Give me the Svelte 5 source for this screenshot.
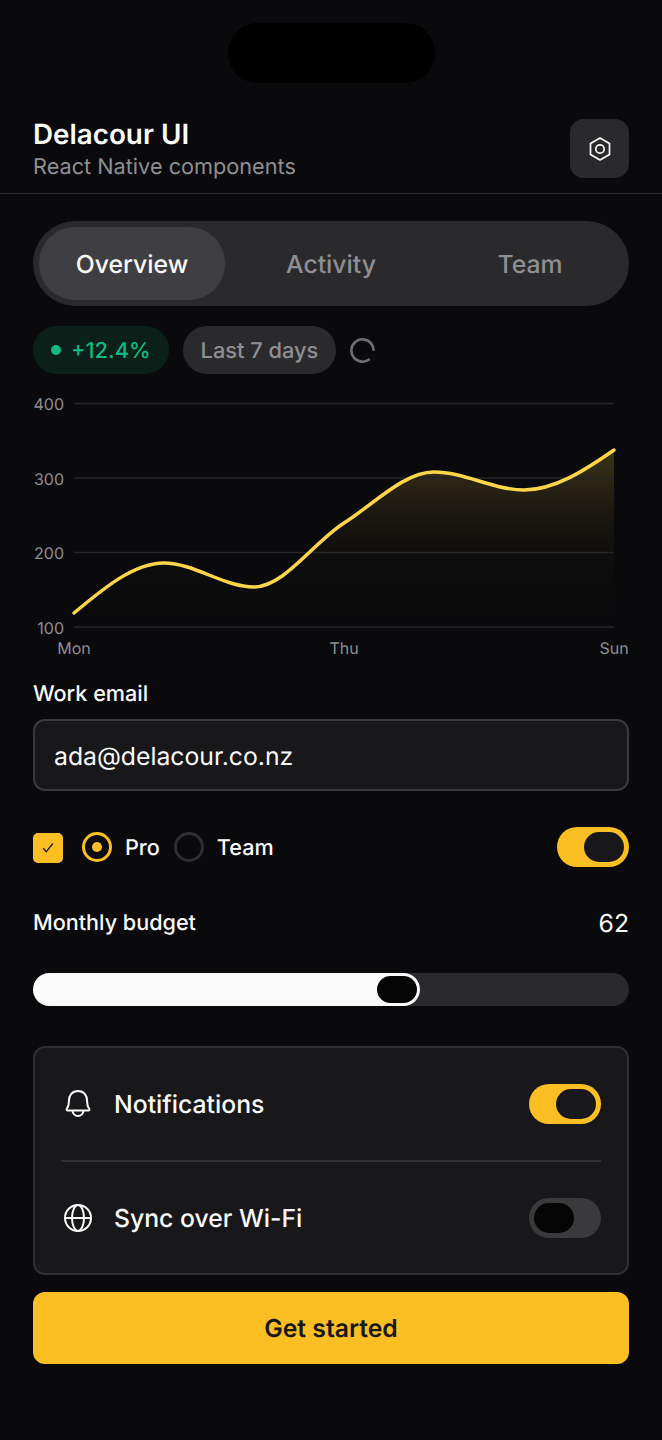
<script>
  let tabs = ['Overview', 'Activity', 'Team'];
  let ticks = [
    { label: '400', y: 403.5 },
    { label: '300', y: 478 },
    { label: '200', y: 552.5 },
    { label: '100', y: 627 }
  ];
  let days = [
    { label: 'Mon', x: 74 },
    { label: 'Thu', x: 344 },
    { label: 'Sun', x: 614 }
  ];
  let budget = 62;
  // the thumb travels over the track minus its own width
  let fillWidth = (budget / 100) * 556 + 42;

  const curve = 'M74 613C104 588 134 563 164 563C194 563 224 587 254 587C284 587 314 542 344 523C374 504 404 472 434 472C464 472 494 490 524 490C554 490 584 471 614 450';
</script>

<main class="pantalla">
  <div class="notch"></div>

  <header class="cabecera">
    <div>
      <h1>Delacour UI</h1>
      <p>React Native components</p>
    </div>
    <button class="icono-btn" aria-label="Settings">
      <svg width="28" height="28" viewBox="0 0 28 28" fill="none" stroke="#fafafa" stroke-width="1.700" stroke-linejoin="round">
        <path d="M14 3l9.500 5.500v11L14 25l-9.500-5.500v-11z" />
        <circle cx="14" cy="14" r="4.200" />
      </svg>
    </button>
  </header>

  <section class="contenido">
    <div class="tabs">
      {#each tabs as tab, i}
        <div class="tab" class:activa={i === 0}>{tab}</div>
      {/each}
    </div>

    <div class="chips">
      <span class="chip verde"><i class="punto"></i><span class="chip-texto">+12.4%</span></span>
      <span class="chip gris"><span class="chip-texto">Last 7 days</span></span>
      <svg class="spinner" width="25" height="25" viewBox="0 0 25 25" fill="none">
        <circle cx="12.500" cy="12.500" r="11.200" stroke="#6e6e73" stroke-width="2.600" stroke-dasharray="60.500 70.400" transform="rotate(50 12.500 12.500)" />
      </svg>
    </div>

    <svg class="grafica" width="596" height="286" viewBox="33 384 596 286">
      <defs>
        <linearGradient id="relleno" x1="0" y1="450" x2="0" y2="627" gradientUnits="userSpaceOnUse">
          <stop offset="0" stop-color="#ffd54a" stop-opacity="0.2" />
          <stop offset="0.35" stop-color="#ffd54a" stop-opacity="0.07" />
          <stop offset="0.62" stop-color="#ffd54a" stop-opacity="0.012" />
          <stop offset="1" stop-color="#ffd54a" stop-opacity="0" />
        </linearGradient>
      </defs>
      <path d="{curve}V627H74Z" fill="url(#relleno)" />
      {#each ticks as t}
        <line x1="74" x2="614" y1={t.y} y2={t.y} stroke="#242426" stroke-width="1.500" />
        <text class="eje" x="64" y={t.y + 6.500} text-anchor="end">{t.label}</text>
      {/each}
      <path d={curve} fill="none" stroke="#ffd54a" stroke-width="3.500" stroke-linecap="round" />
      {#each days as d}
        <text class="eje" x={d.x} y="653.500" text-anchor="middle">{d.label}</text>
      {/each}
    </svg>

    <label class="etiqueta" for="correo">Work email</label>
    <input id="correo" class="campo" type="text" value="ada@delacour.co.nz" />

    <div class="controles">
      <span class="check">
        <svg width="12" height="12" viewBox="0 0 12 12" fill="none" stroke="#18181b" stroke-width="1.300" stroke-linecap="round" stroke-linejoin="round">
          <path d="M1.500 6.500l2.800 3.200L10.500 2" />
        </svg>
      </span>
      <span class="radio marcado"><i></i></span>
      <span class="opcion pro">Pro</span>
      <span class="radio"></span>
      <span class="opcion">Team</span>
      <span class="toggle on empuja"><i></i></span>
    </div>

    <div class="presupuesto">
      <span>Monthly budget</span>
      <span>{budget}</span>
    </div>

    <div class="slider">
      <div class="slider-fill" style="width: {fillWidth}px"><i></i></div>
    </div>

    <div class="tarjeta">
      <div class="fila">
        <svg class="icono" width="28" height="28" viewBox="0 0 28 28" fill="none" stroke="#fafafa" stroke-width="2" stroke-linejoin="round">
          <path d="M14 1C8 1 5 5.500 5 10.500C5 14.500 4.300 16.800 2.800 18.800C2.200 19.700 2.700 20.500 3.700 20.500H24.300C25.300 20.500 25.800 19.700 25.200 18.800C23.700 16.800 23 14.500 23 10.500C23 5.500 20 1 14 1Z" />
          <path d="M8.500 20.500a5.500 5.500 0 0 0 11 0" />
        </svg>
        <span class="fila-texto">Notifications</span>
        <span class="toggle on"><i></i></span>
      </div>
      <div class="fila con-linea">
        <svg class="icono" width="28" height="28" viewBox="0 0 28 28" fill="none" stroke="#fafafa" stroke-width="2">
          <circle cx="14" cy="14" r="13" />
          <ellipse cx="14" cy="14" rx="6" ry="13" />
          <path d="M1 14h26" />
        </svg>
        <span class="fila-texto">Sync over Wi-Fi</span>
        <span class="toggle"><i></i></span>
      </div>
    </div>

    <button class="principal">Get started</button>
  </section>
</main>

<style>
  :global(body) {
    background: #0a0a0c;
  }

  .pantalla {
    width: 662px;
    height: 1440px;
    box-sizing: border-box;
    padding-top: 23px;
    background: #0a0a0c;
    color: #fafafa;
    font-family: Inter, "Liberation Sans", sans-serif;
    text-rendering: geometricPrecision;
    overflow: hidden;
  }

  .notch {
    width: 207px;
    height: 60px;
    margin: 0 auto;
    background: #000;
    border-radius: 30px;
  }

  .cabecera {
    display: flex;
    justify-content: space-between;
    align-items: flex-start;
    margin-top: 36px;
    padding: 0 33px 15px;
    height: 59px;
    border-bottom: 1.500px solid #2a2a2c;
  }

  h1 {
    margin: 0;
    font-size: 27.800px;
    line-height: 30px;
    font-weight: 600;
  }

  .cabecera p {
    margin: 4px 0 0;
    font-size: 21.700px;
    line-height: 28px;
    color: #8e8e93;
  }

  .icono-btn {
    width: 59px;
    height: 59px;
    padding: 0;
    border: none;
    border-radius: 14px;
    background: #2a2a2c;
    display: flex;
    align-items: center;
    justify-content: center;
  }

  .contenido {
    padding: 27px 33px 0;
    display: flex;
    flex-direction: column;
  }

  .tabs {
    display: flex;
    gap: 13px;
    height: 85px;
    padding: 6px;
    box-sizing: border-box;
    border-radius: 42.500px;
    background: #2a2a2c;
  }

  .tab {
    flex: 1;
    display: flex;
    align-items: center;
    justify-content: center;
    border-radius: 36px;
    font-size: 24.750px;
    font-weight: 450;
    color: #8e8e93;
  }

  .tab.activa {
    background: #3f3f42;
    color: #fafafa;
  }

  .chips {
    display: flex;
    align-items: center;
    gap: 14px;
    margin-top: 20px;
  }

  .chip {
    display: flex;
    align-items: center;
    height: 48px;
    padding: 0 18px;
    border-radius: 24px;
    font-size: 21.800px;
    font-weight: 450;
  }

  .chip-texto {
    padding-top: 2px;
  }

  .verde {
    background: #0a2019;
    color: #10b981;
    gap: 10px;
  }

  .punto {
    width: 10px;
    height: 10px;
    border-radius: 50%;
    background: #10b981;
  }

  .gris {
    background: #2a2a2c;
    color: #8e8e93;
  }

  .grafica {
    display: block;
    margin-top: 10px;
  }

  .eje {
    font-size: 16px;
    fill: #8e8e93;
  }

  .etiqueta {
    margin-top: 10px;
    font-size: 21.600px;
    line-height: 28px;
    font-weight: 450;
  }

  .campo {
    margin-top: 11px;
    height: 72px;
    box-sizing: border-box;
    padding: 2px 19px 0;
    background: #18181b;
    border: 2px solid #3a3a3c;
    border-radius: 12px;
    color: #fafafa;
    font: 400 24.750px Inter, "Liberation Sans", sans-serif;
    text-rendering: geometricPrecision;
    outline: none;
  }

  .controles {
    display: flex;
    align-items: center;
    height: 40px;
    margin-top: 36px;
  }

  .check {
    width: 30px;
    height: 30px;
    margin-top: 2px;
    border-radius: 5px;
    background: #fbbf24;
    display: flex;
    align-items: center;
    justify-content: center;
    margin-right: 19px;
  }

  .radio {
    width: 30px;
    height: 30px;
    box-sizing: border-box;
    border: 3px solid #2f2f31;
    border-radius: 50%;
    display: flex;
    align-items: center;
    justify-content: center;
  }

  .radio.marcado {
    border-color: #fbbf24;
  }

  .radio i {
    width: 10px;
    height: 10px;
    border-radius: 50%;
    background: #fbbf24;
  }

  .opcion {
    margin-left: 13px;
    padding-top: 2px;
    font-size: 21.600px;
    font-weight: 450;
  }

  .opcion.pro {
    margin-right: 14px;
  }

  .toggle {
    width: 72px;
    height: 40px;
    box-sizing: border-box;
    padding: 5px;
    border-radius: 20px;
    background: #3a3a3c;
    display: flex;
    flex-shrink: 0;
  }

  .toggle i {
    width: 40px;
    height: 30px;
    border-radius: 15px;
    background: #050505;
  }

  .toggle.on {
    background: #fbbf24;
    justify-content: flex-end;
  }

  .toggle.on i {
    background: #18181b;
  }

  .empuja {
    margin-left: auto;
  }

  .presupuesto {
    display: flex;
    justify-content: space-between;
    align-items: center;
    margin-top: 42px;
    margin-bottom: -1px;
    font-size: 21.600px;
    line-height: 28px;
    font-weight: 450;
  }

  .presupuesto span:last-child {
    font-size: 24.750px;
    font-weight: 400;
  }

  .slider {
    height: 33px;
    margin-top: 37px;
    border-radius: 16.500px;
    background: #2a2a2c;
  }

  .slider-fill {
    height: 33px;
    box-sizing: border-box;
    padding: 3px;
    border-radius: 16.500px;
    background: #fafafa;
    display: flex;
    justify-content: flex-end;
  }

  .slider-fill i {
    width: 40px;
    height: 27px;
    border-radius: 13.500px;
    background: #050505;
  }

  .tarjeta {
    margin-top: 40px;
    height: 229px;
    box-sizing: border-box;
    padding: 0 26px;
    background: #18181b;
    border: 2px solid #2f2f31;
    border-radius: 12px;
  }

  .fila {
    display: flex;
    align-items: center;
    height: 112px;
  }

  .con-linea {
    height: 113px;
    border-top: 2px solid #2f2f31;
    box-sizing: border-box;
  }

  .icono {
    flex-shrink: 0;
    margin-right: 22.500px;
    margin-left: 2.500px;
  }

  .fila-texto {
    flex: 1;
    font-size: 24.750px;
    font-weight: 450;
  }

  .principal {
    margin-top: 17px;
    height: 72px;
    border: none;
    border-radius: 12px;
    background: #fbbf24;
    color: #18181b;
    font: 600 24.750px Inter, "Liberation Sans", sans-serif;
    text-rendering: geometricPrecision;
  }
</style>
